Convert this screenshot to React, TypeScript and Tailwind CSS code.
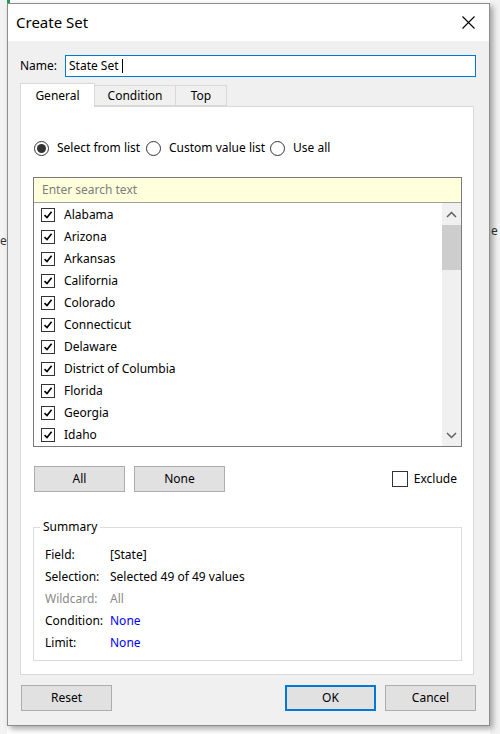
import React from 'react';

const STATES = [
  'Alabama',
  'Arizona',
  'Arkansas',
  'California',
  'Colorado',
  'Connecticut',
  'Delaware',
  'District of Columbia',
  'Florida',
  'Georgia',
  'Idaho',
];

const Check: React.FC<{ checked?: boolean }> = ({ checked }) => (
  <span className="w-[14px] h-[14px] border border-[#333] bg-white flex items-center justify-center shrink-0">
    {checked && (
      <svg width="10" height="10" viewBox="0 0 10 10">
        <path d="M1.5 5.2 L4 7.6 L8.6 1.8" fill="none" stroke="#000" strokeWidth="1.6" />
      </svg>
    )}
  </span>
);

const Radio: React.FC<{ checked?: boolean; label: string; w: string }> = ({ checked, label, w }) => (
  <label className={`flex items-center gap-[8px] ${w}`}>
    <span className="w-[15px] h-[15px] rounded-full border border-[#333] bg-white flex items-center justify-center shrink-0">
      {checked && <span className="w-[9px] h-[9px] rounded-full bg-[#333]" />}
    </span>
    <span>{label}</span>
  </label>
);

const Btn: React.FC<{ label: string; primary?: boolean; className?: string }> = ({ label, primary, className }) => (
  <button
    className={`h-[26px] w-[91px] bg-[#e1e1e1] text-[12px] text-black flex items-center justify-center ${
      primary ? 'border-2 border-[#0078d7]' : 'border border-[#adadad]'
    } ${className ?? ''}`}
  >
    {label}
  </button>
);

const Chevron: React.FC<{ up?: boolean }> = ({ up }) => (
  <svg width="11" height="7" viewBox="0 0 11 7">
    <path d={up ? 'M1 6 L5.5 1.5 L10 6' : 'M1 1 L5.5 5.5 L10 1'} fill="none" stroke="#606060" strokeWidth="1.5" />
  </svg>
);

export default function App() {
  const summary = [
    { k: 'Field:', v: '[State]', kc: 'text-black', vc: 'text-black' },
    { k: 'Selection:', v: 'Selected 49 of 49 values', kc: 'text-black', vc: 'text-black' },
    { k: 'Wildcard:', v: 'All', kc: 'text-[#8a8a8a]', vc: 'text-[#8a8a8a]' },
    { k: 'Condition:', v: 'None', kc: 'text-black', vc: 'text-[#0000ff]' },
    { k: 'Limit:', v: 'None', kc: 'text-black', vc: 'text-[#0000ff]' },
  ];

  return (
    <div className="relative w-[500px] h-[734px] overflow-hidden bg-white font-['Noto_Sans',sans-serif] text-[12px] text-black">
      {/* sheet behind the dialog */}
      <div className="absolute left-0 top-0 w-[10px] h-[25px] bg-[#1e9e5a] text-white text-[14px] leading-[25px] pl-[1px]">ri</div>
      <div className="absolute left-0 right-0 top-[28px] h-px bg-[#d4d4d4]" />
      <div className="absolute left-0 right-0 top-[90px] h-px bg-[#e4e4e4]" />
      <div className="absolute left-0 right-0 top-[290px] h-px bg-[#e4e4e4]" />
      <div className="absolute left-0 right-0 top-[420px] h-px bg-[#e4e4e4]" />
      <div className="absolute left-0 right-0 top-[718px] h-px bg-[#e4e4e4]" />
      <div className="absolute left-0 top-0 bottom-0 w-[7px] bg-[#f3f3f3]" />
      <div className="absolute right-0 top-0 bottom-0 w-[10px] bg-[#f3f3f3]" />
      <span className="absolute left-0 top-[232px] text-[12px] text-[#333]">e</span>
      <span className="absolute left-[491px] top-[222px] text-[12px] text-[#333]">e</span>

      {/* dialog */}
      <div className="absolute left-[7px] top-[3px] w-[483px] h-[723px] border border-[#8c8c8c] bg-[#f0f0f0] shadow-[3px_3px_6px_rgba(0,0,0,0.35)] flex flex-col">
        <div className="h-[37px] bg-white flex items-center justify-between pl-[8px] pr-[14px] shrink-0">
          <span className="text-[15px] text-black">Create Set</span>
          <svg width="13" height="13" viewBox="0 0 13 13">
            <path d="M0.5 0.5 L12.5 12.5 M12.5 0.5 L0.5 12.5" stroke="#000" strokeWidth="1.1" />
          </svg>
        </div>

        <div className="flex-1 flex flex-col pl-[12px] pr-[13px]">
          <div className="mt-[14px] flex items-center h-[22px]">
            <span className="w-[45px]">Name:</span>
            <div className="flex-1 h-[22px] border border-[#0078d7] bg-white flex items-center pl-[3px]">
              <span>State Set</span>
              <span className="ml-[3px] w-px h-[14px] bg-black" />
            </div>
          </div>

          {/* tabs */}
          <div className="mt-[6px] flex items-end h-[23px] relative z-10">
            <div className="h-[24px] w-[75px] bg-white border border-b-0 border-[#d9d9d9] flex items-center justify-center -mb-px pt-[1px]">
              General
            </div>
            <div className="h-[21px] w-[81px] bg-[#f0f0f0] border border-l-0 border-[#d9d9d9] flex items-center justify-center pt-[1px]">
              Condition
            </div>
            <div className="h-[21px] w-[51px] bg-[#f0f0f0] border border-l-0 border-[#d9d9d9] flex items-center justify-center pt-[1px]">
              Top
            </div>
          </div>

          {/* panel */}
          <div className="mr-[2px] h-[569px] bg-white border border-[#d9d9d9] flex flex-col pl-[12px] pr-[11px]">
            <div className="mt-[33px] h-[16px] flex items-center pl-[1px]">
              <Radio checked label="Select from list" w="w-[112px]" />
              <Radio label="Custom value list" w="w-[124px]" />
              <Radio label="Use all" w="w-auto" />
            </div>

            <div className="mt-[21px] border border-[#7a7a7a] flex flex-col">
              <div className="h-[25px] bg-[#ffffdc] border-b border-[#a0a0a0] flex items-center pl-[8px] text-[#7d7d7d]">
                Enter search text
              </div>
              <div className="h-[243px] flex bg-white">
                <div className="flex-1 pt-[1px]">
                  {STATES.map((s) => (
                    <div key={s} className="h-[22px] flex items-center gap-[9px] pl-[7px]">
                      <Check checked />
                      <span>{s}</span>
                    </div>
                  ))}
                </div>
                <div className="w-[19px] bg-[#f0f0f0] flex flex-col items-center">
                  <div className="h-[21px] flex items-center justify-center mt-[1px]">
                    <Chevron up />
                  </div>
                  <div className="w-full h-[45px] bg-[#cdcdcd]" />
                  <div className="flex-1" />
                  <div className="h-[21px] flex items-center justify-center">
                    <Chevron />
                  </div>
                </div>
              </div>
            </div>

            <div className="mt-[19px] h-[26px] flex items-center">
              <Btn label="All" className="ml-px" />
              <Btn label="None" className="ml-[9px]" />
              <div className="flex-1" />
              <div className="flex items-center gap-[6px] mr-[5px]">
                <span className="w-[16px] h-[16px] border border-[#333] bg-white" />
                <span>Exclude</span>
              </div>
            </div>

            <div className="mt-[35px] h-[134px] border border-[#dcdcdc] relative">
              <span className="absolute left-[6px] top-[-9px] bg-white px-[3px] leading-[16px]">Summary</span>
              <div className="pt-[16px] pl-[11px] flex flex-col">
                {summary.map((r) => (
                  <div key={r.k} className="h-[22px] flex items-center">
                    <span className={`w-[65px] ${r.kc}`}>{r.k}</span>
                    <span className={r.vc}>{r.v}</span>
                  </div>
                ))}
              </div>
            </div>
          </div>

          <div className="mt-[10px] flex items-center">
            <Btn label="Reset" className="ml-px" />
            <div className="flex-1" />
            <Btn label="OK" primary />
            <Btn label="Cancel" className="ml-[9px]" />
          </div>
        </div>
      </div>
    </div>
  );
}
